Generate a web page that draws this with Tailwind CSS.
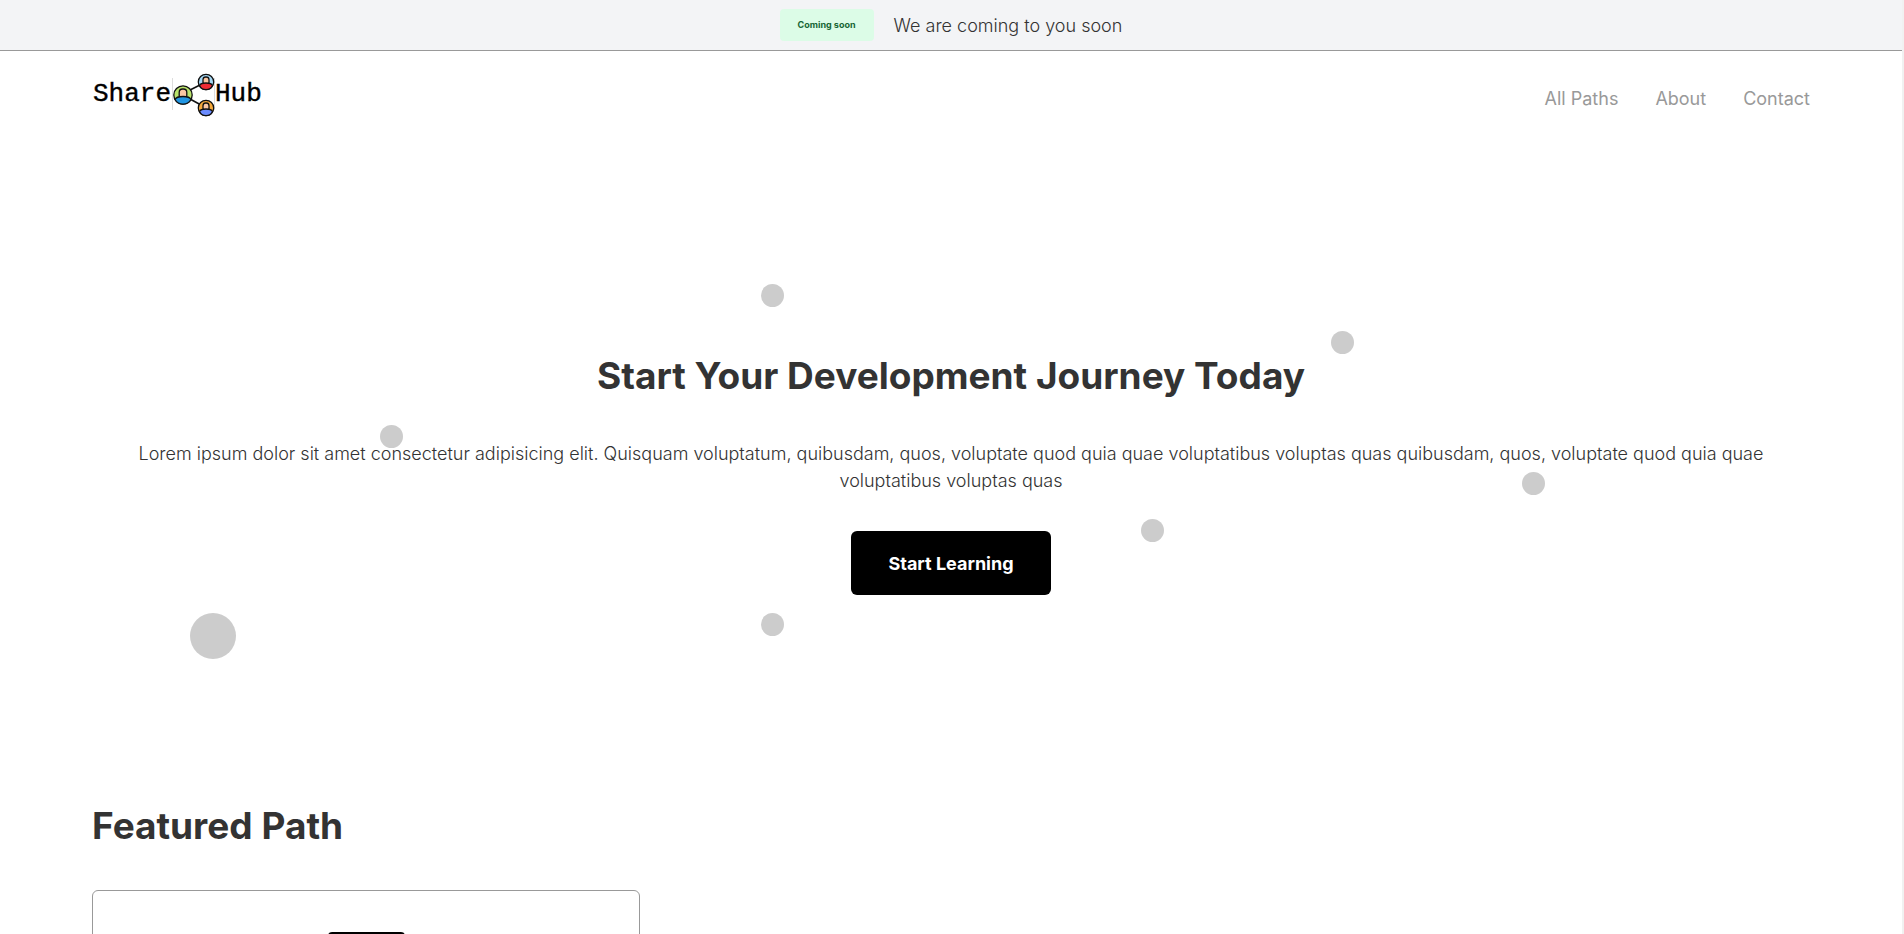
<!DOCTYPE html>
<html lang="en" class="overflow-hidden">
<head>
<meta charset="utf-8">
<title>ShareHub</title>
<script src="https://cdn.jsdelivr.net/npm/@tailwindcss/browser@4"></script>
</head>
<body class="h-screen overflow-hidden border-r-2 border-[#f1f1f1] bg-white font-['Inter',sans-serif] text-lg leading-[27px] font-light text-[#333]">
  <div class="flex h-[51px] items-center justify-center gap-5 border-b border-[#999] bg-[#f3f4f6]">
    <span class="rounded bg-[#dcfce7] px-[18px] py-2 text-[9px] leading-4 font-bold text-[#166534]">Coming soon</span>
    <p>We are coming to you soon</p>
  </div>
  <header class="flex h-[92px] items-start justify-between px-[92px]">
    <a href="#" aria-label="ShareHub" class="pt-5">
      <svg class="h-[46px] w-[172px]" viewBox="0 0 172 46" font-family="'Liberation Mono',monospace" font-size="26">
        <g fill="#000" stroke="#000" stroke-width=".4"><text x="1" y="30">Share</text><text x="123" y="30">Hub</text></g>
        <path d="M80.500 7v32M122.500 7v32" stroke="#ddd"/>
        <path d="M98 19 108 14M98 28l11 6" stroke="#111" stroke-width="1.600"/>
        <g stroke="#111" stroke-width="1.300">
          <circle cx="91" cy="24" r="9.200" fill="#b9e36b"/>
          <rect x="87.200" y="18" width="7.600" height="10" rx="3.400" fill="#fbc7a3"/>
          <path d="M83 28.500c1-2.500 4-3 8-3s7 .5 8 3c-2 3.500-4.500 4.700-8 4.700s-6-1.200-8-4.700Z" fill="#2196e3"/>
          <circle cx="114" cy="11" r="7.700" fill="#a5d8f5"/>
          <rect x="111" y="6" width="6" height="8" rx="2.800" fill="#fbc7a3"/>
          <path d="M107.500 14.500c1-2.200 3-2.500 6.500-2.500s5.500.3 6.500 2.500c-1.500 3-3.500 4.200-6.500 4.200s-5-1.200-6.500-4.200Z" fill="#ef2b35"/>
          <circle cx="114" cy="37" r="7.700" fill="#f5a83a"/>
          <rect x="111" y="32" width="6" height="8" rx="2.800" fill="#fbc7a3"/>
          <path d="M107.500 40.500c1-2.200 3-2.500 6.500-2.500s5.500.3 6.500 2.500c-1.500 3-3.500 4.200-6.500 4.200s-5-1.200-6.500-4.200Z" fill="#6b8cff"/>
        </g>
      </svg>
    </a>
    <nav class="flex gap-[37px] pt-[34px] font-normal text-[#999]">
      <a href="#">All Paths</a>
      <a href="#">About</a>
      <a href="#">Contact</a>
    </nav>
  </header>
  <main>
    <section class="relative flex h-[470px] flex-col items-center justify-end px-[92px] pb-[18px] text-center">
      <div aria-hidden="true" class="absolute inset-0 -z-10">
        <i class="absolute top-[30%] left-[40%] size-[23px] rounded-full bg-[#ccc]"></i>
        <i class="absolute top-[40%] left-[70%] size-[23px] rounded-full bg-[#ccc]"></i>
        <i class="absolute top-[60%] left-[20%] size-[23px] rounded-full bg-[#ccc]"></i>
        <i class="absolute top-[70%] left-[80%] size-[23px] rounded-full bg-[#ccc]"></i>
        <i class="absolute top-[80%] left-[60%] size-[23px] rounded-full bg-[#ccc]"></i>
        <i class="absolute top-full left-[40%] size-[23px] rounded-full bg-[#ccc]"></i>
        <i class="absolute top-full left-[10%] size-[46px] rounded-full bg-[#ccc]"></i>
      </div>
      <h1 class="text-[37px] leading-[56px] font-bold">Start Your Development Journey Today</h1>
      <p class="mt-9 px-4">Lorem ipsum dolor sit amet consectetur adipisicing elit. Quisquam voluptatum, quibusdam, quos, voluptate quod quia quae voluptatibus voluptas quas quibusdam, quos, voluptate quod quia quae voluptatibus voluptas quas</p>
      <button type="button" class="mt-[37px] h-16 rounded-md bg-black px-[37px] font-bold text-white">Start Learning</button>
    </section>
    <section class="px-[92px] pt-[185px]">
      <h2 class="text-[37px] leading-[56px] font-bold">Featured Path</h2>
      <div class="mt-9 grid grid-cols-3 gap-[37px]">
        <article class="h-80 rounded-md border border-[#999] pt-[41px]">
          <div class="mx-auto h-20 w-[77px] rounded-sm bg-black"></div>
        </article>
      </div>
    </section>
  </main>
</body>
</html>
